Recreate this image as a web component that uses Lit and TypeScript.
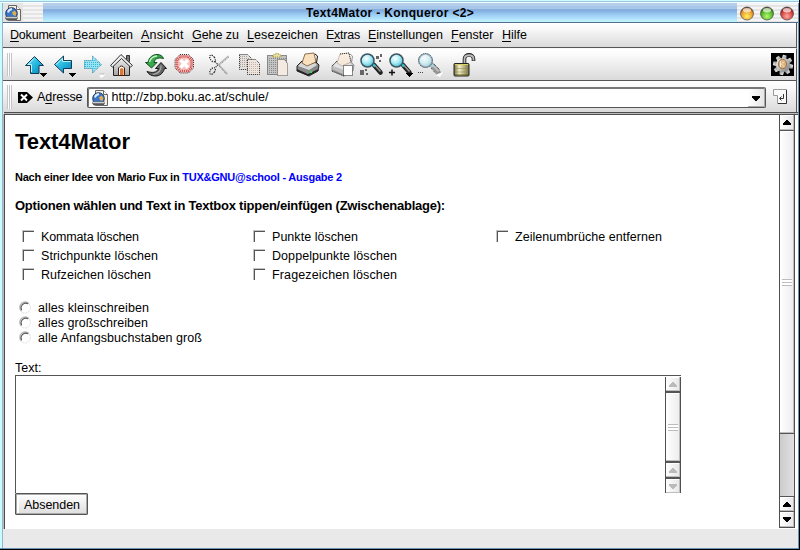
import { LitElement, html, css, svg } from "lit";
import { customElement, property } from "lit/decorators.js";

/** One line of text, tracked so that it fills a given advance width. */
@customElement("fit-text")
class FitText extends LitElement {
  @property({ type: Number }) w = 0;
  static styles = css`
    :host { display: inline-block; white-space: nowrap; }
  `;
  render() { return html`<slot></slot>`; }
  firstUpdated() {
    const n = (this.textContent || "").length;
    const range = document.createRange();
    range.selectNodeContents(this);
    const natural = range.getBoundingClientRect().width;
    if (n > 1 && natural) this.style.letterSpacing = `${((this.w - natural) / (n - 0.5)).toFixed(4)}px`;
    this.style.width = `${this.w}px`;
  }
}

const defs = svg`<defs>
  <linearGradient id="cy" x1="0" y1="0" x2="1" y2="1"><stop offset="0" stop-color="#7fe4fa"/><stop offset=".5" stop-color="#25b8e0"/><stop offset="1" stop-color="#0880b4"/></linearGradient>
  <radialGradient id="lens" cx=".4" cy=".35" r=".7"><stop offset="0" stop-color="#fff"/><stop offset=".5" stop-color="#a8ecf6"/><stop offset="1" stop-color="#48b8d0"/></radialGradient>
  <linearGradient id="gr" x1="0" y1="0" x2="0" y2="1"><stop offset="0" stop-color="#f8f8f8"/><stop offset="1" stop-color="#a4a4a4"/></linearGradient>
  <linearGradient id="br" x1="0" y1="0" x2="1" y2="0"><stop offset="0" stop-color="#6e6a38"/><stop offset=".35" stop-color="#f4f0c4"/><stop offset="1" stop-color="#77713c"/></linearGradient>
</defs>`;

const tri = (x: number, y: number, c = "#000") => svg`<path d="M${x} ${y}h7v1h-1v1h-1v1h-1v1h-1v-1h-1v-1h-1v-1h-1z" fill=${c} shape-rendering="crispEdges"/>`;
const glass = svg`<path d="M15 14L21.500 21.500" stroke="#222" stroke-width="4.600" stroke-linecap="round"/><path d="M15.500 14L21.500 20.500" stroke="#999" stroke-width="1.500"/><path d="M13.500 12.500l2.500 3" stroke="#2bc6dc" stroke-width="2.500"/><circle cx="8.500" cy="9.500" r="6.500" fill="url(#lens)" stroke="#3d5660" stroke-width="1.500"/>`;
const printer = svg`<path d="M2 15L7 10L12 13L21 11L24 14L23 20L14 25L2 20z" fill="#888" stroke="#222"/><path d="M3 15L7 11L12 14L20 12L22 14L14 19z" fill="#d8d8d8"/><path d="M10 3L19 2L21 11L12 15L7 12z" fill="#fbe0bd" stroke="#6a5030" stroke-width=".8"/><path d="M20 3l2.500 2l-1 7" stroke="#111" fill="none"/><path d="M2 19L13 24L23 19" fill="none" stroke="#222" stroke-width="1.500"/><path d="M15 20h2v2h-2z" fill="#2be040"/>`;
const upArrow = svg`<path d="M12.500 5.500L21.500 14.500H17V22.500H8.500V14.500H3.500z" fill="url(#cy)" stroke="#143a58" stroke-linejoin="round"/><path d="M12 7.500L6 13.500H9.500V21" fill="none" stroke="#b8f6ff"/>`;
const backArrow = svg`<path d="M3.500 13.500L12.500 5V9.500H20.500V17.500H12.500V22z" fill="url(#cy)" stroke="#143a58" stroke-linejoin="round"/><path d="M5 13.500L11.500 7.500V10.500H19.500" fill="none" stroke="#b8f6ff"/>`;

/* Stippled outline and fill that mark an unavailable action. */
const dots = "1 1";

const icons: Record<string, unknown> = {
  up: svg`${upArrow}${tri(18, 22)}`,
  back: svg`${backArrow}${tri(18, 22)}`,
  forward: svg`<path d="M21.500 13.500L12.500 5V9.500H4.500V17.500H12.500V22z" fill="#9be3f3" stroke="#127a9c" stroke-dasharray=${dots}/><path d="M5 11.500H18M5 13.500H20M5 15.500H18M12.500 9.500H16M12.500 17.500H16" stroke="#30b6d8" stroke-dasharray=${dots}/><path d="M19 25L26 21.500L24 25L21.500 27z" fill="#fff"/><path d="M19 22h7l-3 2z" fill="#ccc"/>`,
  home: svg`<path d="M17.500 4.500h3v6h-3z" fill="#777" stroke="#333"/><path d="M4.500 13L12.500 5L20.500 13V24.500H4.500z" fill="url(#gr)" stroke="#222"/><path d="M1.500 14.500L12 3.500L23.500 14.500L21.500 16L12.500 7.500L3.500 16z" fill="#eee" stroke="#333"/><path d="M9.500 24.500V17q3-4 6 0V24.500z" fill="#fff" stroke="#4a1c08"/><path d="M11 24V18q1.500-2 3.500 0V24z" fill="#d6783a"/>`,
  reload: svg`<path d="M1.500 11.500H4C5 6 9 3.500 13 3.500C16.500 3.500 18.500 5 19.500 7.500C16 6.500 11 6.500 10 11.500H13L7.500 17z" fill="#3aa84c" stroke="#124c20" stroke-linejoin="round"/><path d="M5.500 11Q7 5.500 13 5" stroke="#c0f4c0" fill="none" stroke-width="1.400"/><path d="M22.500 17.500H20.500C19 22.500 15.500 25 11.500 25C7 25 4.500 23 3 20.500C8 22 13 22 14.500 17.500H11.500L17 11.500z" fill="#666" stroke="#151515" stroke-linejoin="round"/><path d="M17 14.500Q17.500 22 9 23.500" stroke="#aaa" fill="none" stroke-width="1.200"/>`,
  stop: svg`<path d="M7 3.500H15.500L20.500 8.500V17L15.500 22H7L2 17V8.500z" fill="#f3c4c0" stroke="#333" stroke-dasharray=${dots}/><path d="M7.500 5.500H15L18.500 9V16.500L15 20H7.500L4 16.500V9z" stroke="#d04444" stroke-width="2.600" stroke-dasharray=${dots}/><path d="M7.500 9L15 16.500M15 9L7.500 16.500" stroke="#fff" stroke-width="3.400"/>`,
  cut: svg`<g fill="none" stroke="#222" stroke-width="1.200" stroke-dasharray="1.200 1"><ellipse cx="4.500" cy="7.500" rx="2.200" ry="3.800" transform="rotate(-35 4.500 7.500)"/><ellipse cx="4.500" cy="20" rx="2.200" ry="3.800" transform="rotate(35 4.500 20)"/><path d="M7 10.500L10 13.500L7 17"/></g><path d="M10 14L20.500 5M10.500 13.500L19.500 23" stroke="#b4b4b4" stroke-width="1.300"/><path d="M11 14.500L21 6M11 15L19 24" stroke="#666" stroke-width=".8" stroke-dasharray=${dots}/>`,
  copy: svg`<path d="M2.500 3.500H10.500L14.500 7.500V18.500H2.500z" fill="#e4e0dc"/><path d="M3 5.500H11M3 7.500H12M3 9.500H12M3 11.500H12M3 13.500H12M3 15.500H12" stroke="#a9a19c" stroke-dasharray=${dots}/><path d="M2.500 3.500H10.500L14.500 7.500V18.500H2.500z" stroke="#222" stroke-dasharray=${dots}/><path d="M10.500 8.500H18.500L22.500 12.500V23.500H10.500z" fill="#efe6e0"/><path d="M12 11.500H19M12 13.500H21M12 15.500H21M12 17.500H21M12 19.500H21M12 21.500H21" stroke="#c4b3aa" stroke-dasharray=${dots}/><path d="M10.500 8.500H18.500L22.500 12.500V23.500H10.500z" stroke="#222" stroke-dasharray=${dots}/>`,
  paste: svg`<path d="M1.500 4.500H20.500V23.500H1.500z" fill="#c4c4c4" stroke="#333" stroke-dasharray=${dots}/><path d="M3 7.500H20M3 9.500H20M3 11.500H20M3 13.500H20M3 15.500H20M3 17.500H20M3 19.500H20M3 21.500H20" stroke="#888" stroke-dasharray=${dots}/><path d="M7 6V4h2V2.500h4V4h2v2z" fill="#e6dfa8" stroke="#aa9c28" stroke-dasharray=${dots}/><path d="M11.500 8.500H18.500L21.500 12.500V24.500H11.500z" fill="#f4eae2" stroke="#555" stroke-dasharray=${dots}/>`,
  print: svg`${printer}`,
  printFrame: svg`<g opacity=".42">${printer}</g><path d="M2 15L7 10M2 20L14 25M10 3L19 2L21 11" stroke="#333" stroke-dasharray=${dots}/><rect x="13.500" y="14.500" width="9" height="10" fill="#fff" stroke="#222" stroke-dasharray=${dots}/>`,
  find: svg`${glass}<path d="M17 5h3v3h-3zM21 3h2v3h-2zM20 9h2v2h-2zM1 19h4v5H1zM6 18h2v2H6zM7 22h2v2H7z" fill="#666"/>`,
  zoomIn: svg`${glass}<path d="M1 21.500h6M4 18.500v6" stroke="#111" stroke-width="1.500"/>${tri(18, 22)}`,
  zoomOut: svg`<g opacity=".42">${glass}</g><circle cx="8.500" cy="9.500" r="7" stroke="#246" stroke-dasharray=${dots}/><path d="M14 17l6 7M17 13l6 6" stroke="#333" stroke-dasharray=${dots}/><path d="M1 21.500h6" stroke="#444" stroke-dasharray=${dots}/><path d="M18 24L26 21L23 26z" fill="#fff"/>`,
  lock: svg`<path d="M12.500 14V8C12.500 2.500 21.500 2.500 21.500 8V10" fill="none" stroke="#222" stroke-width="3.600"/><path d="M12.500 14V8C12.500 3 21.500 3 21.500 8V9.500" fill="none" stroke="#bbb" stroke-width="1.800"/><rect x="2" y="12.500" width="15" height="12.500" rx="1" fill="url(#br)" stroke="#222"/><path d="M3 13.500H16" stroke="#d8d060"/><path d="M3 17.500H16M3 21H16" stroke="#8a8458" opacity=".5"/><path d="M3 24h13" stroke="#5c5820"/>`,
};

const pageIcon = svg`<path d="M3.500 .5H11.500L15.500 4.500V15.500H3.500z" fill="#f6efe2" stroke="#666"/><path d="M11.500 .5V4.500H15.500" fill="#fff" stroke="#666"/><circle cx="6.500" cy="8.500" r="5.800" fill="#3a74c8" stroke="#15294e" stroke-width=".9"/><path d="M3 7.500q.5-3 4-3.500" stroke="#dceeff" stroke-width="1.800" fill="none"/><path d="M7 7.500l2.500-2l2 2.500l-1 3l-2.500-1z" fill="#dcb050"/><path d="M.5 11.500H12.500L13 13.500L11 15.500H2L0 13.500z" fill="#777"/><path d="M1 12.500H12" stroke="#ccc"/><path d="M1.500 14.500H12" stroke="#333" stroke-dasharray="1 1"/>`;

@customElement("scroll-arrow")
class ScrollArrow extends LitElement {
  @property() dir = "up";
  static styles = css`
    :host { display: flex; align-items: center; justify-content: center; height: 14px; background: linear-gradient(90deg, #fff, #e6e6e6);
      box-shadow: inset -1px -1px #bdbdbd, inset 1px 1px #fff; color: var(--arrow, #000); }
    svg { display: block; }
  `;
  render() {
    return html`<svg width="8" height="5" viewBox="0 0 8 5" shape-rendering="crispEdges">
      <path fill="currentColor" d=${this.dir === "up" ? "M0 5V3H1V2H2V1H3V0H5V1H6V2H7V3H8V5z" : "M0 0H8V2H7V3H6V4H5V5H3V4H2V3H1V2H0z"} /></svg>`;
  }
}

type Menu = [string, string, string, number, number];
const menus: Menu[] = [
  ["", "D", "okument", 10, 55.5], ["", "B", "earbeiten", 73, 60], ["", "A", "nsicht", 141, 42.5],
  ["", "G", "ehe zu", 192, 47], ["", "L", "esezeichen", 247, 71], ["E", "x", "tras", 326, 34],
  ["", "E", "instellungen", 368, 75], ["", "F", "enster", 451, 42.5], ["", "H", "ilfe", 502, 25],
];
const tools = [["up", "back", "forward", "home"], ["reload", "stop"], ["cut", "copy", "paste", "print"], ["printFrame", "find", "zoomIn", "zoomOut"], ["lock"]];
const checks: [string, number][] = [
  ["Kommata löschen", 98], ["Punkte löschen", 86], ["Zeilenumbrüche entfernen", 147],
  ["Strichpunkte löschen", 117], ["Doppelpunkte löschen", 125], ["", 0],
  ["Rufzeichen löschen", 110], ["Fragezeichen löschen", 125],
];
const radios: [string, number][] = [["alles kleinschreiben", 111], ["alles großschreiben", 110], ["alle Anfangsbuchstaben groß", 164]];
const balls = [["#e89020", "#fff468"], ["#44b01c", "#b8f870"], ["#d03434", "#ffaaa0"]];
const teeth = Array.from({ length: 8 }, (_, i) => i * 45);

@customElement("app-root")
class AppRoot extends LitElement {
  static styles = css`
    :host { display: block; width: 800px; height: 550px; font: 12.5px "Liberation Sans", Arial, sans-serif; color: #000; }
    * { box-sizing: border-box; }
    svg { display: block; overflow: visible; }
    .window { width: 800px; height: 550px; overflow: hidden; display: flex; flex-direction: column; background: #e9e9e9;
      border-style: solid; border-width: 0 1px 1px 0; border-color: #000;
      box-shadow: inset -1px -1px #6c92b8, inset 2px 0 #c8fcff, inset 3px 0 #94b4d4; padding: 0 2px 0 3px; }
    .edge { height: 3px; margin: 0 -2px 0 -3px; background: linear-gradient(#c8fcff 0 1px, #9fc4dc 1px 2px, #f4ffff 2px); flex: none; }
    .title { display: flex; height: 20px; flex: none; border-bottom: 1px solid #55708c; margin-right: -1px; }
    .stripes { background: repeating-linear-gradient(#f5f5f5 0 2px, #e4e4e4 2px 4px); }
    .tag { width: 20px; padding: 2px 0 0 2px; background: #e4e4e4; }
    .gap { width: 20px; }
    .caption { flex: 1; text-align: center; font-weight: bold; font-size: 12px; line-height: 21px;
      background: linear-gradient(#b5cee9 0 3px, #a8c6e8 3px 6px, #86afdf 6px 8px, #8bb9e8 9px, #a4d3f7 13px, #c2f5ff 19px); }
    .balls { width: 61px; display: flex; gap: 6px; padding: 3px 0 0 3px; }
    .bar { flex: none; display: flex; background: linear-gradient(#fff, #fafafa 20%, #dadada); border-bottom: 1px solid #555; border-right: 1px solid #555; }
    .menu { height: 25px; position: relative; }
    .menu fit-text { position: absolute; top: 4px; line-height: 17px; }
    u { text-decoration: underline; text-decoration-thickness: 1px; text-underline-offset: 2px; text-decoration-skip-ink: none; }
    .tools { height: 33px; border-top: 1px solid #f8f8f8; }
    .grip { width: 5px; margin: 4px 10px 4px 4px; background: repeating-linear-gradient(90deg, #c4c4c4 0 1px, #fff 1px 2px); }
    .group { display: flex; margin: 2px 6px 0 0; }
    .group svg { width: 29px; height: 27px; }
    .gear { margin: 4px 2px 0 auto; }
    .address { height: 31px; border-bottom: 0; align-items: flex-start; }
    .address .grip { height: 24px; margin-right: 6px; }
    .clear { margin-top: 11px; }
    .label { margin: 8px 0 0 4px; line-height: 17px; }
    .field { display: flex; margin: 6px 0 0 4px; width: 679px; height: 21px; border: 1px solid #555; border-top-color: #777; border-radius: 2px; background: #fff; box-shadow: inset 1px 1px #777; padding: 1px 0 0 4px; }
    .field svg { margin-top: 1px; }
    .field fit-text { line-height: 16px; margin-left: 3px; }
    .field .drop { margin-left: auto; width: 17px; padding: 6px 0 0 4px; background: linear-gradient(90deg, #fff, #e4e4e4); box-shadow: inset -1px -1px #aaa; }
    .go { margin: 8px 0 0 7px; }
    .view { flex: none; height: 415px; display: flex; width: 794px; background: #fff; border: solid #4e4e4e; border-width: 1px 0 0 1px; box-shadow: 0 -1px #bbb, 0 -2px #4e4e4e, -1px 0 #bbb; margin: 2px 0 0 1px; }
    .content { width: 774px; padding: 14px 0 0 10px; }
    h1, h2, h3 { margin: 0; font-weight: bold; white-space: nowrap; }
    h1, h2, h3, .text { display: flex; }
    h1 { font-size: 22px; line-height: 26px; }
    h2 { font-size: 11px; line-height: 14px; margin-top: 15px; }
    h2 a { color: #00f; }
    h3 { font-size: 13px; line-height: 16px; margin-top: 14px; }
    .checks { display: grid; grid-template-columns: 231px 243px 200px; grid-auto-rows: 19px; line-height: 20px; margin: 13px 0 0 7px; }
    .check { display: flex; }
    .box { width: 12px; height: 12px; margin: 3px 7px 0 0; border: solid #c4c4c4; border-width: 1px 0 0 1px; box-shadow: inset 1px 1px #555; }
    .radios { margin: 16px 0 0 3px; line-height: 16px; }
    .radio { display: flex; height: 15px; }
    .radio svg { margin: 1px 7px 0 1px; }
    .text { margin-top: 15px; height: 15px; line-height: 16px; }
    .area { width: 666px; height: 118px; border: solid #555; border-width: 1px 0 0 1px; display: flex; justify-content: flex-end; }
    .button { width: 73px; height: 22px; padding-left: 8px; line-height: 22px; border: 1px solid #555; border-radius: 1px;
      background: linear-gradient(#fff, #dedede); box-shadow: inset 1px 1px #aaa, inset -1px -1px #aaa, inset 3px 2px #fff; }
    .scroll { width: 16px; border: solid #4f4f4f; border-width: 0 1px 1px; display: flex; flex-direction: column; flex: none; }
    .scroll scroll-arrow { flex: none; }
    .thumb { flex: none; display: flex; align-items: center; justify-content: center; background: linear-gradient(90deg, #fff, #ececec); box-shadow: inset -1px -1px #bdbdbd, inset 1px 1px #fff; }
    .thumb i { width: 10px; height: 7px; background: repeating-linear-gradient(#bcbcbc 0 1px, #fff 1px 3px); }
    .rule { flex: none; height: 2px; background: #555; }
    .rule.thin { height: 1px; }
    .page { height: 413px; }
    .page .thumb { height: 302px; }
    .page scroll-arrow { height: 15px; }
    .page .track + .rule + scroll-arrow { height: 14px; }
    .track { flex: 1; background: linear-gradient(90deg, #ccc, #e0e0e0); }
    .inner { --arrow: #bbb; margin-top: 1px; height: 116px; }
    .inner .thumb { height: 68px; }
  `;

  render() {
    return html`<div class="window">
      <div class="edge"></div>
      <div class="title">
        <div class="tag"><svg width="17" height="16">${pageIcon}</svg></div>
        <div class="gap stripes"></div>
        <div class="caption"><fit-text .w=${168}>Text4Mator - Konqueror &lt;2&gt;</fit-text></div>
        <div class="balls stripes">${balls.map(([a, b], i) => html`<svg width="14" height="15" viewBox="0 0 14 15">
          <defs><radialGradient id="b${i}" cy=".72" r=".75"><stop offset="0" stop-color=${b}/><stop offset=".65" stop-color=${a}/><stop offset="1" stop-color="#402010"/></radialGradient></defs>
          <circle cx="7" cy="7.500" r="6.500" fill="url(#b${i})" stroke="#444" stroke-width=".7"/><ellipse cx="7" cy="4.200" rx="4" ry="2.200" fill="#fff" opacity=".65"/></svg>`)}</div>
      </div>
      <div class="bar menu">${menus.map(([a, k, b, x, w]) => html`<fit-text .w=${w} style="left:${x - 3}px">${a}<u>${k}</u>${b}</fit-text>`)}</div>
      <div class="bar tools">
        <div class="grip"></div>
        ${tools.map(g => html`<div class="group">${g.map(n => html`<svg viewBox="0 0 29 27" fill="none">${defs}${icons[n]}</svg>`)}</div>`)}
        <svg class="gear" width="23" height="23"><defs><linearGradient id="g" x2="1" y2="1"><stop stop-color="#fff"/><stop offset="1" stop-color="#777"/></linearGradient></defs>
          <rect width="23" height="23" fill="#000"/><g fill="url(#g)">${teeth.map(a => svg`<path d="M9.500 6L10.300 2H13.700L14.500 6z" transform="rotate(${a + 10} 12 12)"/>`)}<circle cx="12" cy="12" r="7"/></g>
          <ellipse cx="11.500" cy="11" rx="4" ry="4.800" fill="#dcb27a" stroke="#927048"/><path d="M9.500 8v6M13.500 8.500l-3 2.500l3 3" stroke="#f4e4cc" fill="none"/></svg>
      </div>
      <div class="bar address">
        <div class="grip"></div>
        <svg class="clear" width="15" height="11"><path d="M0 0H9L15 5.500L9 11H0z"/><path d="M3 2.500L9 8.500M9 2.500L3 8.500" stroke="#fff" stroke-width="2"/></svg>
        <div class="label"><fit-text .w=${45.5}>A<u>d</u>resse</fit-text></div>
        <div class="field"><svg width="17" height="16">${pageIcon}</svg><fit-text .w=${157}>http://zbp.boku.ac.at/schule/</fit-text>
          <div class="drop"><svg width="8" height="5" shape-rendering="crispEdges"><path d="M0 0H8V2H7V3H6V4H5V5H3V4H2V3H1V2H0z"/></svg></div></div>
        <svg class="go" width="15" height="16" fill="none"><path d="M4.500 .5H13.500V14.500H4.500V6.500H.5V.5z" fill="#fafafa" stroke="#999"/><path d="M13.500 1V14.500H5" stroke="#333"/><path d="M10.500 5V9.500H7M8.500 7.500L6.500 9.500L8.500 11.500" stroke="#333"/></svg>
      </div>
      <div class="view">
        <div class="content">
          <h1><fit-text .w=${115}>Text4Mator</fit-text></h1>
          <h2><fit-text .w=${327}>Nach einer Idee von Mario Fux in <a>TUX&amp;GNU@school - Ausgabe 2</a></fit-text></h2>
          <h3><fit-text .w=${430}>Optionen wählen und Text in Textbox tippen/einfügen (Zwischenablage):</fit-text></h3>
          <div class="checks">${checks.map(([t, w]) => t ? html`<div class="check"><span class="box"></span><fit-text .w=${w}>${t}</fit-text></div>` : html`<div></div>`)}</div>
          <div class="radios">${radios.map(([t, w]) => html`<div class="radio"><svg width="12" height="13" fill="none"><circle cx="6" cy="6.500" r="5.500" stroke="#dcdcdc" stroke-dasharray="2 1"/><path d="M2.500 10A5.300 5.300 0 0 1 10 2.500" stroke="#bbb" stroke-width="1.500"/><path d="M2.700 9A4.600 4.600 0 0 1 9 2.800" stroke="#555" stroke-width="1.100"/></svg><fit-text .w=${w}>${t}</fit-text></div>`)}</div>
          <div class="text"><fit-text .w=${26.5}>Text:</fit-text></div>
          <div class="area"><div class="scroll inner">
            <scroll-arrow></scroll-arrow><div class="rule"></div><div class="thumb"><i></i></div><div class="rule"></div>
            <scroll-arrow></scroll-arrow><div class="rule"></div><scroll-arrow dir="down"></scroll-arrow></div></div>
          <div class="button"><fit-text .w=${56}>Absenden</fit-text></div>
        </div>
        <div class="scroll page">
          <scroll-arrow></scroll-arrow><div class="rule thin"></div><div class="thumb"><i></i></div><div class="rule thin"></div>
          <div class="track"></div><div class="rule thin"></div><scroll-arrow></scroll-arrow><div class="rule thin"></div><scroll-arrow dir="down"></scroll-arrow>
        </div>
      </div>
    </div>`;
  }
}
